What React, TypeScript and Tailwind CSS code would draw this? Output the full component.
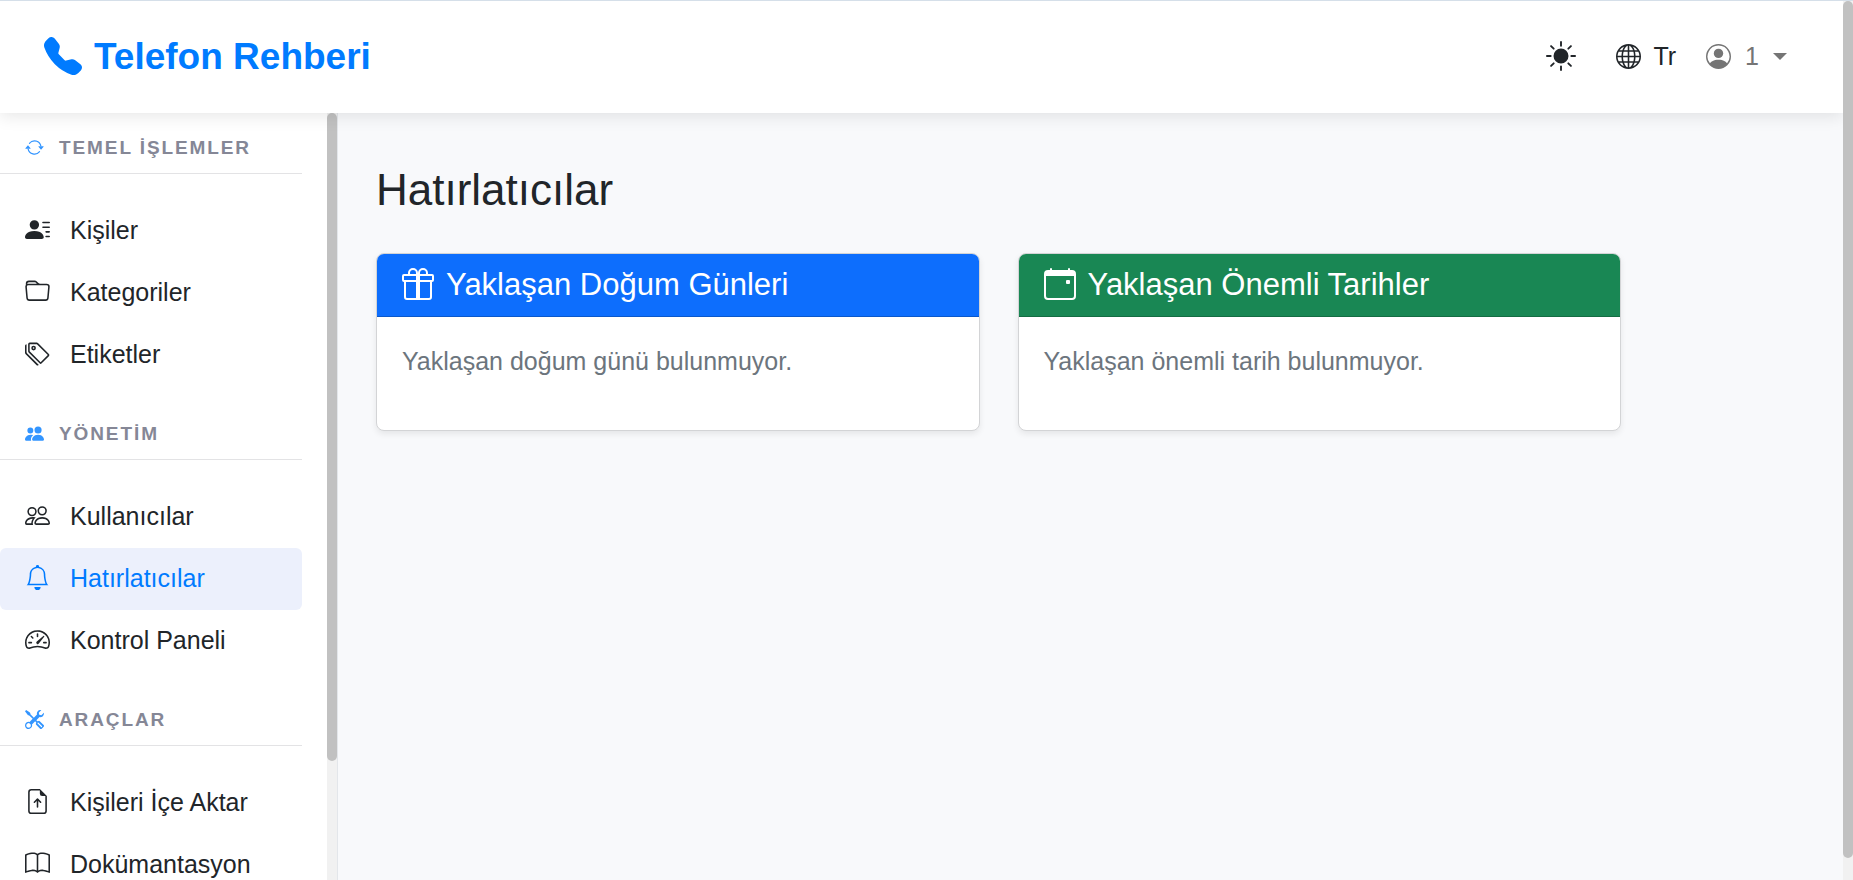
import { useState } from 'react';
import type { ReactNode } from 'react';
import type { IconType } from 'react-icons';
import {
  BsArrowRepeat,
  BsBell,
  BsBook,
  BsCalendarEvent,
  BsFileEarmarkArrowUp,
  BsFolder,
  BsGift,
  BsGlobe,
  BsPeople,
  BsPeopleFill,
  BsPersonCircle,
  BsPersonLinesFill,
  BsSpeedometer2,
  BsSunFill,
  BsTags,
  BsTelephoneFill,
  BsTools,
} from 'react-icons/bs';

type Section = {
  title: string;
  icon: IconType;
  items: { id: string; label: string; icon: IconType }[];
};

const sections: Section[] = [
  {
    title: 'TEMEL İŞLEMLER',
    icon: BsArrowRepeat,
    items: [
      { id: 'contacts', label: 'Kişiler', icon: BsPersonLinesFill },
      { id: 'categories', label: 'Kategoriler', icon: BsFolder },
      { id: 'tags', label: 'Etiketler', icon: BsTags },
    ],
  },
  {
    title: 'YÖNETİM',
    icon: BsPeopleFill,
    items: [
      { id: 'users', label: 'Kullanıcılar', icon: BsPeople },
      { id: 'reminders', label: 'Hatırlatıcılar', icon: BsBell },
      { id: 'dashboard', label: 'Kontrol Paneli', icon: BsSpeedometer2 },
    ],
  },
  {
    title: 'ARAÇLAR',
    icon: BsTools,
    items: [
      { id: 'import', label: 'Kişileri İçe Aktar', icon: BsFileEarmarkArrowUp },
      { id: 'docs', label: 'Dokümantasyon', icon: BsBook },
    ],
  },
];

function Header() {
  return (
    <header className="relative z-10 flex h-28 shrink-0 items-center justify-between bg-white pr-14 pl-11 shadow-[0_3px_16px_rgba(0,0,0,0.1)]">
      <a href="#" className="flex items-center gap-3 text-[37px] font-bold text-[#007bff]">
        <BsTelephoneFill className="mb-0.5 size-[38px]" />
        Telefon Rehberi
      </a>
      <div className="flex items-center text-[25px] text-[#212529]">
        <button type="button" aria-label="Tema" className="mr-10 text-3xl">
          <BsSunFill className="mb-0.5" />
        </button>
        <button type="button" className="mr-[30px] flex items-center gap-3">
          <BsGlobe className="mb-0.5" />
          Tr
        </button>
        <button type="button" className="flex items-center gap-3.5 text-[#757575]">
          <BsPersonCircle className="mb-0.5" />
          1
          <svg viewBox="0 0 14 7" className="mb-0.5 h-[7px] w-3.5" fill="currentColor" aria-hidden="true">
            <path d="M0 0h14L7 7z" />
          </svg>
        </button>
      </div>
    </header>
  );
}

function Sidebar() {
  const [active, setActive] = useState('reminders');

  return (
    <aside className="flex w-[338px] shrink-0 border-r border-[#e3e6ea] bg-white">
      <nav className="flex-1 overflow-y-auto pr-[25px] [scrollbar-width:none]">
        {sections.map((section) => (
          <div key={section.title} className="group">
            <h2 className="mb-[26px] flex items-center gap-[15px] border-b border-[#e3e3e5] pt-[33px] pb-2.5 pl-[25px] text-[19px]/[30px] font-bold tracking-widest text-[#858796] group-first:pt-5">
              <section.icon className="mb-0.5 size-[19px] text-[#3395ff]" />
              {section.title}
            </h2>
            {section.items.map((item) => (
              <a
                key={item.id}
                href={`#${item.id}`}
                onClick={() => setActive(item.id)}
                className={`flex h-[62px] items-center gap-5 rounded-md pl-[25px] text-[25px] ${
                  active === item.id ? 'bg-[#ecf0fc] text-[#007bff]' : 'text-[#212529]'
                }`}
              >
                <item.icon className="mb-[3px]" />
                {item.label}
              </a>
            ))}
          </div>
        ))}
      </nav>
      {/* Scrollbar */}
      <div className="w-2.5 bg-[#f1f1f1]">
        <div className="h-[84.5%] rounded-full bg-[#c1c1c1]" />
      </div>
    </aside>
  );
}

function ReminderCard({
  icon: Icon,
  title,
  color,
  children,
}: {
  icon: IconType;
  title: string;
  color: string;
  children: ReactNode;
}) {
  return (
    <section className="overflow-hidden rounded-lg border border-[#d3d4d6] bg-white shadow-[0_3px_6px_rgba(0,0,0,0.08)]">
      <h2
        className={`flex h-[63px] items-center gap-3 border-b border-black/20 px-[25px] text-[31px] text-white ${color}`}
      >
        <Icon className="mb-[3px] size-8" />
        {title}
      </h2>
      <p className="px-[25px] pt-[25px] pb-[50px] text-[25px]/[38px] text-[#6c757d]">{children}</p>
    </section>
  );
}

export default function App() {
  return (
    <div className="flex h-screen overflow-hidden border-t border-[#d5dfe9] bg-[#f8f9fb] font-['Liberation_Sans',Arial,sans-serif]">
      <div className="flex min-w-0 flex-1 flex-col">
        <Header />
        <div className="flex min-h-0 flex-1">
          <Sidebar />
          <main className="min-w-0 flex-1 overflow-y-auto p-[38px] [scrollbar-width:none]">
            <h1 className="mt-3 mb-9 text-[44px]/[54px] text-[#212529]">Hatırlatıcılar</h1>
            <div className="grid max-w-[1245px] grid-cols-2 gap-[38px]">
              <ReminderCard icon={BsGift} title="Yaklaşan Doğum Günleri" color="bg-[#0d6efd]">
                Yaklaşan doğum günü bulunmuyor.
              </ReminderCard>
              <ReminderCard icon={BsCalendarEvent} title="Yaklaşan Önemli Tarihler" color="bg-[#198754]">
                Yaklaşan önemli tarih bulunmuyor.
              </ReminderCard>
            </div>
          </main>
        </div>
      </div>
      {/* Page scrollbar */}
      <div className="relative z-20 w-2.5 bg-[#f1f1f1]">
        <div className="h-[97.5%] rounded-full bg-[#c1c1c1]" />
      </div>
    </div>
  );
}
